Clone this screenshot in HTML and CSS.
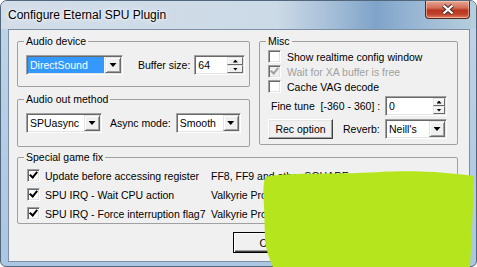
FILE: index.html
```html
<!DOCTYPE html>
<html lang="en">
<head>
    <meta charset="UTF-8">
    <meta name="viewport" content="width=device-width, initial-scale=1.0">
    <title>Configure Eternal SPU Plugin</title>
    <link rel="stylesheet" href="styles.css">
</head>
<body>
    <div class="window">
        <div class="titlebar">
            <span class="title">Configure Eternal SPU Plugin</span>
            <div class="close-btn">
                <svg width="14" height="11" viewBox="0 0 14 11">
                    <path d="M2.5 1.5 L11.5 9.5 M11.5 1.5 L2.5 9.5" stroke="#47302c" stroke-width="4.2"/>
                    <path d="M2.5 1.5 L11.5 9.5 M11.5 1.5 L2.5 9.5" stroke="#ffffff" stroke-width="2.2"/>
                </svg>
            </div>
        </div>

        <div class="client">
            <div class="top-row">
                <div class="left-col">
                    <!-- Audio device -->
                    <fieldset class="group">
                        <legend>Audio device</legend>
                        <div class="group-body device-body">
                            <div class="combo device-combo">
                                <span class="combo-value selected">DirectSound</span>
                                <span class="drop-btn"></span>
                            </div>
                            <span class="buffer-label">Buffer size:</span>
                            <div class="spin buffer-spin">
                                <span class="spin-value">64</span>
                                <span class="spin-btns"><span class="spin-up"></span><span class="spin-down"></span></span>
                            </div>
                        </div>
                    </fieldset>

                    <!-- Audio out method -->
                    <fieldset class="group out-group">
                        <legend>Audio out method</legend>
                        <div class="group-body out-body">
                            <div class="combo method-combo">
                                <span class="combo-value">SPUasync</span>
                                <span class="drop-btn"></span>
                            </div>
                            <span class="async-label">Async mode:</span>
                            <div class="combo mode-combo">
                                <span class="combo-value">Smooth</span>
                                <span class="drop-btn"></span>
                            </div>
                        </div>
                    </fieldset>
                </div>

                <!-- Misc -->
                <fieldset class="group misc-group">
                    <legend>Misc</legend>
                    <div class="group-body misc-body">
                        <div class="check-row"><span class="checkbox"></span>Show realtime config window</div>
                        <div class="check-row disabled"><span class="checkbox checked"></span>Wait for XA buffer is free</div>
                        <div class="check-row"><span class="checkbox"></span>Cache VAG decode</div>
                        <div class="fine-row">
                            <span class="fine-label">Fine tune  [-360 - 360] :</span>
                            <div class="spin fine-spin">
                                <span class="spin-value">0</span>
                                <span class="spin-btns"><span class="spin-up"></span><span class="spin-down"></span></span>
                            </div>
                        </div>
                        <div class="rec-row">
                            <button class="btn rec-btn">Rec option</button>
                            <span class="reverb-label">Reverb:</span>
                            <div class="combo reverb-combo">
                                <span class="combo-value">Neill's</span>
                                <span class="drop-btn"></span>
                            </div>
                        </div>
                    </div>
                </fieldset>
            </div>

            <!-- Special game fix -->
            <fieldset class="group special-group">
                <legend>Special game fix</legend>
                <div class="group-body fix-list">
                    <span class="checkbox checked"></span>
                    <span>Update before accessing register</span>
                    <span>FF8, FF9 and other SQUARE games</span>

                    <span class="checkbox checked"></span>
                    <span>SPU IRQ - Wait CPU action</span>
                    <span>Valkyrie Profile</span>

                    <span class="checkbox checked"></span>
                    <span>SPU IRQ - Force interruption flag7</span>
                    <span>Valkyrie Profile</span>
                </div>
            </fieldset>

            <div class="buttons">
                <button class="btn default-btn">OK</button>
                <button class="btn">Cancel</button>
            </div>
        </div>
    </div>

    <svg class="scribble" width="477" height="267" viewBox="0 0 477 267">
        <path d="M265,177 C285,172 330,175 380,172 C420,170 450,173 474,176 L473,205 C472,230 471,250 470,267 L273,267 C269,258 266,250 265,240 L264,205 C263,195 263,185 265,177 Z" fill="#b5e61d"/>
    </svg>
</body>
</html>
```

FILE: styles.css
```css
body {
    margin: 0;
    font-family: "Liberation Sans", Arial, sans-serif;
    font-size: 10.5px;
    color: #000;
    background: #fff;
}

/* window frame */
.window {
    width: 477px;
    height: 267px;
    box-sizing: border-box;
    display: flex;
    flex-direction: column;
    border: 1px solid #52667c;
    border-radius: 7px 7px 6px 6px;
    background: linear-gradient(to bottom, #c0d4e8, #aac6e2);
    overflow: hidden;
}
.titlebar {
    height: 28px;
    flex: none;
    display: flex;
    align-items: flex-start;
    background: linear-gradient(to right, #d2dde8 0%, #ccdae7 58%, #a3bdd7 70%, #7fa3c9 79%, #95b4d3 86%, #b7cfdd 100%);
}
.title {
    margin: 7px 0 0 7px;
    font-size: 12px;
    line-height: 14px;
    text-shadow: 0 0 6px #fff, 0 0 3px #fff;
}
.close-btn {
    margin-left: auto;
    margin-right: 6px;
    width: 45px;
    height: 18px;
    box-sizing: border-box;
    display: flex;
    align-items: center;
    justify-content: center;
    border: 1px solid #5a2a22;
    border-top: none;
    border-radius: 0 0 4px 4px;
    background: linear-gradient(to bottom, #e6a896 0%, #d36d58 40%, #b8361f 55%, #c2452c 80%, #e0866a 100%);
    box-shadow: inset 0 0 0 1px rgba(255, 220, 200, 0.5);
}

.client {
    flex: 1;
    margin: 0 6px 4px 7px;
    border: 1px solid #7d8fa2;
    background: #f0f0f0;
    padding: 5px 11px 0 8px;
}

/* group boxes */
.group {
    margin: 0;
    padding: 0;
    border: 1px solid #a0a0a0;
    border-radius: 2px;
    min-width: 0;
}
.group legend {
    margin-left: 6px;
    padding: 0 2px;
    line-height: 13px;
}
.top-row {
    display: flex;
    gap: 9px;
}
.left-col {
    width: 233px;
    display: flex;
    flex-direction: column;
    gap: 6px;
}
.misc-group {
    width: 199px;
    box-sizing: border-box;
    align-self: flex-start;
}

.device-body {
    display: flex;
    align-items: center;
    padding: 7px 0 11px 8px;
}
.out-body {
    display: flex;
    align-items: center;
    padding: 7px 0 13px 8px;
}
.buffer-label {
    margin-left: 15px;
}
.async-label {
    margin-left: 8px;
}

/* sunken fields */
.combo, .spin {
    height: 20px;
    box-sizing: border-box;
    display: flex;
    background: #fff;
    border: 1px solid;
    border-color: #a0a0a0 #fff #fff #a0a0a0;
    box-shadow: inset 1px 1px #696969, inset -1px -1px #e3e3e3;
    padding: 1px;
}
.combo-value {
    flex: 1;
    line-height: 16px;
    padding-left: 2px;
    margin-right: 1px;
    white-space: nowrap;
}
.combo-value.selected {
    background: #3399ff;
    color: #fff;
}
.drop-btn {
    width: 16px;
    flex: none;
    box-sizing: border-box;
    display: flex;
    align-items: center;
    justify-content: center;
    background: #f0f0f0;
    border: 1px solid;
    border-color: #e3e3e3 #696969 #696969 #e3e3e3;
    box-shadow: inset 1px 1px #fff, inset -1px -1px #a0a0a0;
}
.drop-btn::after {
    content: '';
    width: 7px;
    height: 4px;
    background: #000;
    clip-path: polygon(0 0, 100% 0, 50% 100%);
}
.device-combo {
    width: 97px;
}
.method-combo {
    width: 76px;
}
.mode-combo {
    width: 65px;
    margin-left: 5px;
}
.reverb-combo {
    width: 62px;
    margin-left: auto;
}

.spin-value {
    flex: 1;
    line-height: 16px;
    padding-left: 2px;
}
.spin-btns {
    flex: none;
    display: flex;
    flex-direction: column;
}
.spin-up, .spin-down {
    flex: 1;
    box-sizing: border-box;
    display: flex;
    align-items: center;
    justify-content: center;
    background: #f0f0f0;
    border: 1px solid;
    border-color: #e3e3e3 #696969 #696969 #e3e3e3;
    box-shadow: inset 1px 1px #fff;
}
.spin-up::after, .spin-down::after {
    content: '';
    width: 5px;
    height: 3px;
    background: #000;
}
.spin-up::after {
    clip-path: polygon(50% 0, 100% 100%, 0 100%);
}
.spin-down::after {
    clip-path: polygon(0 0, 100% 0, 50% 100%);
}
.buffer-spin {
    width: 51px;
    margin-left: 4px;
}
.buffer-spin .spin-btns {
    width: 16px;
}
.fine-spin {
    width: 62px;
    margin-left: auto;
}
.fine-spin .spin-btns {
    width: 12px;
}

/* misc */
.misc-body {
    padding: 1px 10px 5px 8px;
}
.check-row {
    height: 15px;
    display: flex;
    align-items: center;
    gap: 6px;
    white-space: nowrap;
}
.check-row.disabled {
    color: #a0a0a0;
}
.fine-row {
    margin-top: 2px;
    display: flex;
    align-items: center;
}
.fine-label {
    padding-left: 3px;
    white-space: pre;
}
.rec-row {
    margin-top: 3px;
    display: flex;
    align-items: center;
}
.reverb-label {
    margin-left: 10px;
}

.checkbox {
    width: 13px;
    height: 13px;
    flex: none;
    box-sizing: border-box;
    position: relative;
    background: #fff;
    border: 1px solid;
    border-color: #a0a0a0 #fff #fff #a0a0a0;
    box-shadow: inset 1px 1px #696969, inset -1px -1px #e3e3e3;
}
.checkbox.checked::after {
    content: '';
    position: absolute;
    left: 3px;
    top: 0;
    width: 3px;
    height: 6px;
    border: solid #000;
    border-width: 0 2px 2px 0;
    transform: rotate(40deg);
}
.disabled .checkbox {
    background: #f0f0f0;
}
.disabled .checkbox.checked::after {
    border-color: #a0a0a0;
}

/* special game fix */
.special-group {
    margin-top: 4px;
}
.fix-list {
    display: grid;
    grid-template-columns: 13px 166px auto;
    grid-auto-rows: 19px;
    column-gap: 5px;
    align-items: center;
    padding: 2px 0 0 9px;
    white-space: nowrap;
}
.fix-list span:nth-child(3n) {
    margin-left: -5px;
}

/* buttons */
.btn {
    height: 20px;
    box-sizing: border-box;
    padding: 0;
    font: inherit;
    color: #000;
    background: #f0f0f0;
    border: 1px solid;
    border-color: #fff #404040 #404040 #fff;
    box-shadow: inset -1px -1px #a0a0a0, inset 1px 1px #e3e3e3;
}
.rec-btn {
    width: 65px;
}
.buttons {
    display: flex;
    gap: 6px;
    margin-top: 8px;
    padding-left: 216px;
}
.buttons .btn {
    width: 68px;
    height: 21px;
}
.default-btn {
    border: 1px solid #000;
    box-shadow: inset 1px 1px #fff, inset -1px -1px #404040, inset -2px -2px #a0a0a0;
}

.scribble {
    position: absolute;
    left: 0;
    top: 0;
}
```
